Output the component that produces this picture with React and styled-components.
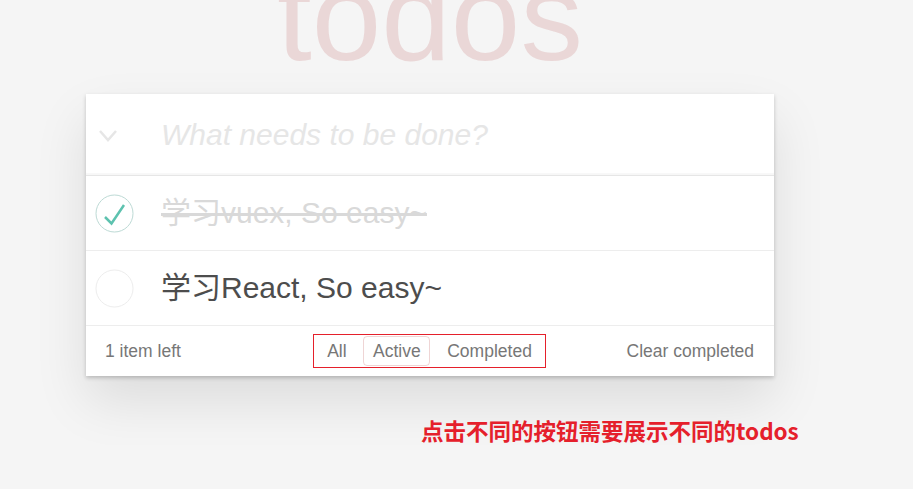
import React from "react";
import styled, { createGlobalStyle } from "styled-components";

const GlobalStyle = createGlobalStyle`
  html, body {
    margin: 0;
    padding: 0;
    background: #f5f5f5;
    font-family: "Liberation Sans", Arial, "Noto Sans CJK SC", sans-serif;
    overflow: hidden;
  }
`;

const Page = styled.div`
  width: 688px;
  margin-left: 86px;
`;

const Title = styled.h1`
  margin: -46px 0 15px;
  font-size: 125px;
  line-height: 1;
  font-weight: 400;
  text-align: center;
  color: rgba(175, 47, 47, 0.15);
`;

const Card = styled.section`
  background: #fff;
  box-shadow: 0 2px 4px rgba(0, 0, 0, 0.2), 0 25px 50px 0 rgba(0, 0, 0, 0.1);
`;

const Header = styled.header`
  display: flex;
  align-items: center;
  height: 81px;
  box-shadow: inset 0 -2px 1px rgba(0, 0, 0, 0.03);
`;

const ToggleAll = styled.div`
  width: 75px;
  display: flex;
  align-items: center;
  padding-left: 12px;
  box-sizing: border-box;
  padding-top: 3px;
`;

const NewTodo = styled.input`
  flex: 1;
  border: none;
  outline: none;
  background: transparent;
  font-family: inherit;
  font-size: 30px;
  padding: 0;
  color: #4d4d4d;
  &::placeholder {
    font-style: italic;
    color: #e6e6e6;
  }
`;

const List = styled.ul`
  margin: 0;
  padding: 0;
  list-style: none;
  border-top: 1px solid #e6e6e6;
`;

const Row = styled.li`
  display: flex;
  align-items: center;
  height: 74px;
  border-bottom: 1px solid #ededed;
`;

const Toggle = styled.div`
  width: 75px;
  padding-left: 9px;
  box-sizing: border-box;
  display: flex;
  align-items: center;
`;

const Label = styled.label`
  font-size: 30px;
  line-height: 1.2;
  color: ${(p) => (p.$done ? "#d9d9d9" : "#4d4d4d")};
  text-decoration: ${(p) => (p.$done ? "line-through" : "none")};
  text-decoration-thickness: 3px;
  white-space: nowrap;
`;

const Footer = styled.footer`
  display: grid;
  grid-template-columns: 1fr auto 1fr;
  align-items: center;
  height: 50px;
  padding: 0 20px 0 19px;
  color: #777;
  font-size: 17.5px;
`;

const Count = styled.span`
  justify-self: start;
`;

const Filters = styled.ul`
  display: flex;
  margin: 0;
  padding: 1px 0;
  list-style: none;
  outline: 1px solid #e5202b;
`;

const FilterLink = styled.a`
  display: inline-block;
  margin: 0 3.5px;
  padding: 3.75px 8.75px;
  line-height: 21px;
  border: 1px solid ${(p) => (p.$selected ? "rgba(175, 47, 47, 0.2)" : "transparent")};
  border-radius: 4px;
  color: inherit;
  text-decoration: none;
`;

const Clear = styled.button`
  justify-self: end;
  border: none;
  background: none;
  padding: 0;
  font: inherit;
  color: inherit;
`;

const Note = styled.div`
  margin: 39px 0 0 335px;
  width: 420px;
  font-family: "Noto Sans CJK SC", "Liberation Sans", sans-serif;
  font-weight: 700;
  font-size: 22.5px;
  line-height: 30px;
  color: #e5202b;
  white-space: nowrap;
`;

const Chevron = () => (
  <svg width="20" height="16" viewBox="0 0 20 16">
    <polyline points="2,3 10,12 18,3" fill="none" stroke="#e6e6e6" strokeWidth="2.5" />
  </svg>
);

const Check = ({ done }) => (
  <svg width="39" height="39" viewBox="0 0 39 39">
    <circle cx="19.5" cy="19.5" r="18.5" fill="none" stroke={done ? "#bddad5" : "#ededed"} strokeWidth="1" />
    {done && (
      <polyline points="10,23 16.5,29.5 29,11" fill="none" stroke="#5dc2af" strokeWidth="2.5" />
    )}
  </svg>
);

const todos = [
  { id: 1, text: "学习vuex, So easy~", done: true },
  { id: 2, text: "学习React, So easy~", done: false },
];

const App = () => {
  return (
    <Page>
      <GlobalStyle />
      <Title>todos</Title>
      <Card>
        <Header>
          <ToggleAll>
            <Chevron />
          </ToggleAll>
          <NewTodo placeholder="What needs to be done?" />
        </Header>
        <List>
          {todos.map((t) => (
            <Row key={t.id}>
              <Toggle>
                <Check done={t.done} />
              </Toggle>
              <Label $done={t.done}>{t.text}</Label>
            </Row>
          ))}
        </List>
        <Footer>
          <Count>1 item left</Count>
          <Filters>
            <li><FilterLink>All</FilterLink></li>
            <li><FilterLink $selected>Active</FilterLink></li>
            <li><FilterLink>Completed</FilterLink></li>
          </Filters>
          <Clear>Clear completed</Clear>
        </Footer>
      </Card>
      <Note>点击不同的按钮需要展示不同的todos</Note>
    </Page>
  );
};

export default App;
